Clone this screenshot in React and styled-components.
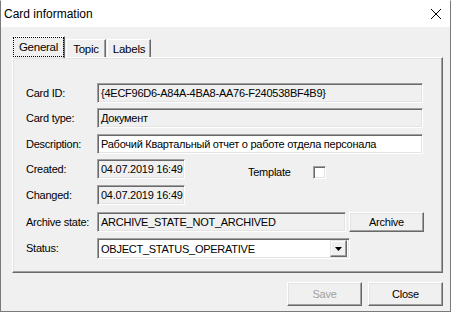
import React from 'react';
import styled, { createGlobalStyle } from 'styled-components';

const GlobalStyle = createGlobalStyle`
  html, body {
    margin: 0;
    padding: 0;
    background: #f0f0f0;
  }
  * { box-sizing: border-box; }
`;

const fields = {
  cardId: '{4ECF96D6-A84A-4BA8-AA76-F240538BF4B9}',
  cardType: 'Документ',
  description: 'Рабочий Квартальный отчет о работе отдела персонала',
  created: '04.07.2019 16:49',
  changed: '04.07.2019 16:49',
  archive: 'ARCHIVE_STATE_NOT_ARCHIVED',
  status: 'OBJECT_STATUS_OPERATIVE',
};

export default function App() {
  return (
    <>
      <GlobalStyle />
      <Window>
        <TitleBar>
          <Title>Card information</Title>
          <CloseIcon width="12" height="12" viewBox="0 0 12 12">
            <path d="M1 1 L11 11 M11 1 L1 11" stroke="#000" strokeWidth="1" fill="none" />
          </CloseIcon>
        </TitleBar>
        <Body>
          <Tabs>
            <Tab selected width={52}><Focus>General</Focus></Tab>
            <Tab width={40}>Topic</Tab>
            <Tab width={44}>Labels</Tab>
          </Tabs>
          <Panel>
            <Row>
              <Label>Card ID:</Label>
              <Field width={326}>{fields.cardId}</Field>
            </Row>
            <Row mt={5}>
              <Label>Card type:</Label>
              <Field width={326}>{fields.cardType}</Field>
            </Row>
            <Row mt={6}>
              <Label>Description:</Label>
              <Field width={326} white>{fields.description}</Field>
            </Row>
            <Row mt={5}>
              <Label>Created:</Label>
              <Field width={88}>{fields.created}</Field>
              <TemplateGroup>
                <Label>Template</Label>
                <Check />
              </TemplateGroup>
            </Row>
            <Row mt={6}>
              <Label>Changed:</Label>
              <Field width={88}>{fields.changed}</Field>
            </Row>
            <Row mt={7}>
              <Label>Archive state:</Label>
              <Field width={249}>{fields.archive}</Field>
              <Button width={75} ml={3}>Archive</Button>
            </Row>
            <Row mt={6}>
              <Label>Status:</Label>
              <Combo>
                <span>{fields.status}</span>
                <DropButton>
                  <svg width="7" height="4" viewBox="0 0 7 4">
                    <path d="M0 0 H7 L3.5 4 Z" fill="#000" />
                  </svg>
                </DropButton>
              </Combo>
            </Row>
          </Panel>
          <Footer>
            <Button width={75} disabled>Save</Button>
            <Button width={75}>Close</Button>
          </Footer>
        </Body>
      </Window>
    </>
  );
}

const Window = styled.div`
  width: 451px;
  height: 312px;
  background: #f0f0f0;
  border: 1px solid #7a7a7a;
  border-top-color: #fff;
  display: flex;
  flex-direction: column;
  font-family: "Liberation Sans", Arial, sans-serif;
  font-size: 11px;
  letter-spacing: -0.25px;
  color: #000;
`;

const TitleBar = styled.div`
  height: 26px;
  background: #fff;
  display: flex;
  align-items: center;
  justify-content: space-between;
  padding: 0 8px 0 3px;
  letter-spacing: 0;
`;

const Title = styled.span`
  font-family: "Liberation Sans", Arial, sans-serif;
  font-size: 12px;
  margin-top: -1px;
`;

const CloseIcon = styled.svg`
  display: block;
  margin-bottom: 1px;
`;

const Body = styled.div`
  flex: 1;
  display: flex;
  flex-direction: column;
  padding: 9px 7px 0 11px;
`;

const Tabs = styled.div`
  display: flex;
  align-items: flex-end;
  gap: 1px;
  height: 21px;
  padding-left: 1px;
  position: relative;
  z-index: 1;
`;

const Tab = styled.div`
  width: ${p => p.width}px;
  height: ${p => (p.selected ? 22 : 18)}px;
  margin-bottom: ${p => (p.selected ? -1 : 0)}px;
  background: #f0f0f0;
  border-top: 1px solid #fff;
  border-left: 1px solid #fff;
  border-right: 1px solid #696969;
  box-shadow: inset -1px 0 0 #a0a0a0;
  display: flex;
  align-items: center;
  justify-content: center;
  font-size: 11.5px;
  padding: ${p => (p.selected ? '0 1px 2px 0' : '1px 0 0 0')};
`;

const Focus = styled.span`
  display: flex;
  align-items: center;
  justify-content: center;
  width: 100%;
  height: 18px;
  outline: 1px dotted #000;
`;

const Panel = styled.div`
  height: 216px;
  border-top: 1px solid #fff;
  border-left: 1px solid #fff;
  border-right: 1px solid #696969;
  border-bottom: 1px solid #696969;
  box-shadow: inset -1px -1px 0 #a0a0a0, inset 1px 1px 0 #e3e3e3;
  padding: 25px 0 0 13px;
`;

const Row = styled.div`
  display: flex;
  align-items: flex-start;
  height: 20px;
  margin-top: ${p => p.mt || 0}px;
`;

const Label = styled.span`
  width: 71px;
  line-height: 20px;
  white-space: nowrap;
`;

const Field = styled.div`
  width: ${p => p.width}px;
  height: 20px;
  background: ${p => (p.white ? '#fff' : '#f0f0f0')};
  border-top: 1px solid #a0a0a0;
  border-left: 1px solid #a0a0a0;
  border-right: 1px solid #fff;
  border-bottom: 1px solid #fff;
  box-shadow: inset 1px 1px 0 #696969, inset -1px -1px 0 #e3e3e3;
  padding: 0 0 0 3px;
  line-height: 18px;
  white-space: nowrap;
  overflow: hidden;
`;

const TemplateGroup = styled.div`
  display: flex;
  align-items: center;
  margin: 3px 0 0 63px;
  & > span {
    width: 65px;
  }
`;

const Check = styled.div`
  width: 13px;
  height: 13px;
  background: #fff;
  border-top: 1px solid #a0a0a0;
  border-left: 1px solid #a0a0a0;
  border-right: 1px solid #fff;
  border-bottom: 1px solid #fff;
  box-shadow: inset 1px 1px 0 #696969, inset -1px -1px 0 #e3e3e3;
`;

const Button = styled.button`
  width: ${p => p.width}px;
  height: 24px;
  margin-left: ${p => p.ml || 0}px;
  background: #f0f0f0;
  font-family: "Liberation Sans", Arial, sans-serif;
  font-size: 11px;
  letter-spacing: -0.25px;
  color: ${p => (p.disabled ? '#a0a0a0' : '#000')};
  border-top: 1px solid #fff;
  border-left: 1px solid #fff;
  border-right: 1px solid #696969;
  border-bottom: 1px solid #696969;
  box-shadow: inset -1px -1px 0 #a0a0a0, inset 1px 1px 0 #e3e3e3;
  padding: 0;
  ${Row} & {
    height: 20px;
  }
`;

const Combo = styled.div`
  width: 253px;
  height: 21px;
  background: #fff;
  border-top: 1px solid #a0a0a0;
  border-left: 1px solid #a0a0a0;
  border-right: 1px solid #fff;
  border-bottom: 1px solid #fff;
  box-shadow: inset 1px 1px 0 #696969, inset -1px -1px 0 #e3e3e3;
  display: flex;
  align-items: center;
  justify-content: space-between;
  padding: 2px 2px 2px 3px;
`;

const DropButton = styled.div`
  width: 17px;
  height: 17px;
  background: #f0f0f0;
  border-top: 1px solid #e3e3e3;
  border-left: 1px solid #e3e3e3;
  border-right: 1px solid #696969;
  border-bottom: 1px solid #696969;
  box-shadow: inset -1px -1px 0 #a0a0a0, inset 1px 1px 0 #fff;
  display: flex;
  align-items: center;
  justify-content: center;
  & svg { display: block; }
`;

const Footer = styled.div`
  display: flex;
  justify-content: flex-end;
  gap: 6px;
  padding: 9px 0 0 0;
`;
